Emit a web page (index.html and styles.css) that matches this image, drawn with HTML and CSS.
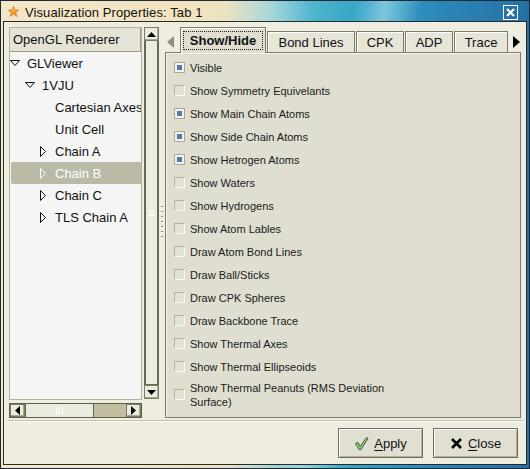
FILE: index.html
```html
<!DOCTYPE html>
<html>
<head>
<meta charset="utf-8">
<link rel="stylesheet" href="styles.css">
</head>
<body>
<div class="window">
  <div class="titlebar">
    <svg class="star" width="11" height="11" viewBox="0 0 11 11"><polygon points="5.5,0.3 7,4 10.8,4.1 7.8,6.5 8.9,10.5 5.5,8.2 2.1,10.5 3.2,6.5 0.2,4.1 4,4" fill="#f29a2e" stroke="#c8741a" stroke-width="0.6"/><polygon points="5.5,2 6.3,4.6 4.7,4.6" fill="#ffd27a"/></svg>
    <span class="title">Visualization Properties: Tab 1</span>
    <span class="closebox"><svg width="13" height="13" viewBox="0 0 13 13"><path d="M3 3 L10 10 M10 3 L3 10" stroke="#fff" stroke-width="2.2"/></svg></span>
  </div>
  <div class="content">
    <div class="main">
      <div class="leftpane">
        <div class="tree">
          <div class="tree-header">OpenGL Renderer</div>
          <div class="tree-body">
            <div class="row l0"><svg class="exp" width="10" height="10" viewBox="0 0 10 10"><path d="M0.5 2.5 H9.5 L5 7.5 Z" fill="none" stroke="#111" stroke-width="1"/></svg>GLViewer</div>
            <div class="row l1"><svg class="exp" width="10" height="10" viewBox="0 0 10 10"><path d="M0.5 2.5 H9.5 L5 7.5 Z" fill="none" stroke="#111" stroke-width="1"/></svg>1VJU</div>
            <div class="row l2"><span class="noexp"></span>Cartesian Axes</div>
            <div class="row l2"><span class="noexp"></span>Unit Cell</div>
            <div class="row l2b"><svg class="exp" width="10" height="11" viewBox="0 0 10 11"><path d="M2.5 0.5 V10.5 L7.5 5.5 Z" fill="none" stroke="#111" stroke-width="1"/></svg>Chain A</div>
            <div class="row l2b selected"><svg class="exp" width="10" height="11" viewBox="0 0 10 11"><path d="M2.5 0.5 V10.5 L7.5 5.5 Z" fill="none" stroke="#fff" stroke-width="1"/></svg>Chain B</div>
            <div class="row l2b"><svg class="exp" width="10" height="11" viewBox="0 0 10 11"><path d="M2.5 0.5 V10.5 L7.5 5.5 Z" fill="none" stroke="#111" stroke-width="1"/></svg>Chain C</div>
            <div class="row l2b"><svg class="exp" width="10" height="11" viewBox="0 0 10 11"><path d="M2.5 0.5 V10.5 L7.5 5.5 Z" fill="none" stroke="#111" stroke-width="1"/></svg>TLS Chain A</div>
          </div>
        </div>
        <div class="vscroll">
          <div class="sbtn"><svg width="9" height="5" viewBox="0 0 9 5"><path d="M0 5 L4.5 0 L9 5 Z" fill="#000"/></svg></div>
          <div class="vthumb"><span class="vgrip"></span></div>
          <div class="sbtn"><svg width="9" height="5" viewBox="0 0 9 5"><path d="M0 0 L4.5 5 L9 0 Z" fill="#000"/></svg></div>
        </div>
        <div class="hscroll">
          <div class="sbtn"><svg width="5" height="9" viewBox="0 0 5 9"><path d="M5 0 L0 4.5 L5 9 Z" fill="#000"/></svg></div>
          <div class="hthumb"><span class="hgrip"></span></div>
          <div class="htrough"></div>
          <div class="sbtn"><svg width="5" height="9" viewBox="0 0 5 9"><path d="M0 0 L5 4.5 L0 9 Z" fill="#000"/></svg></div>
        </div>
      </div>
      <div class="splitter"><span class="sgrip"></span></div>
      <div class="notebook">
        <div class="tabbar">
          <svg class="tabarrow" width="7" height="12" viewBox="0 0 7 12"><path d="M7 0 L0 6 L7 12 Z" fill="#8e8d86"/></svg>
          <div class="tab active"><span class="focus">Show/Hide</span></div>
          <div class="tab t-bond">Bond Lines</div>
          <div class="tab t-cpk">CPK</div>
          <div class="tab t-adp">ADP</div>
          <div class="tab t-trace">Trace</div>
          <svg class="tabarrow right" width="7" height="12" viewBox="0 0 7 12"><path d="M0 0 L7 6 L0 12 Z" fill="#000"/></svg>
        </div>
        <div class="page">
          <div class="opt"><span class="cb on"></span><span class="lbl">Visible</span></div>
          <div class="opt"><span class="cb"></span><span class="lbl">Show Symmetry Equivelants</span></div>
          <div class="opt"><span class="cb on"></span><span class="lbl">Show Main Chain Atoms</span></div>
          <div class="opt"><span class="cb on"></span><span class="lbl">Show Side Chain Atoms</span></div>
          <div class="opt"><span class="cb on"></span><span class="lbl">Show Hetrogen Atoms</span></div>
          <div class="opt"><span class="cb"></span><span class="lbl">Show Waters</span></div>
          <div class="opt"><span class="cb"></span><span class="lbl">Show Hydrogens</span></div>
          <div class="opt"><span class="cb"></span><span class="lbl">Show Atom Lables</span></div>
          <div class="opt"><span class="cb"></span><span class="lbl">Draw Atom Bond Lines</span></div>
          <div class="opt"><span class="cb"></span><span class="lbl">Draw Ball/Sticks</span></div>
          <div class="opt"><span class="cb"></span><span class="lbl">Draw CPK Spheres</span></div>
          <div class="opt"><span class="cb"></span><span class="lbl">Draw Backbone Trace</span></div>
          <div class="opt"><span class="cb"></span><span class="lbl">Show Thermal Axes</span></div>
          <div class="opt"><span class="cb"></span><span class="lbl">Show Thermal Ellipseoids</span></div>
          <div class="opt multi"><span class="cb"></span><span class="lbl">Show Thermal Peanuts (RMS Deviation Surface)</span></div>
        </div>
      </div>
    </div>
    <div class="sep"></div>
    <div class="buttons">
      <div class="btn"><svg width="15" height="15" viewBox="0 0 15 15"><path d="M1.5 7.5 L4 6.5 L6.2 10.5 L12.5 1.5 L14 2.5 L6.5 14 L5.5 14 Z" fill="#9fd08a" stroke="#2f5a2a" stroke-width="1" stroke-linejoin="round"/></svg><span><u>A</u>pply</span></div>
      <div class="btn"><svg width="13" height="13" viewBox="0 0 13 13"><path d="M2 2 L11 11 M11 2 L2 11" stroke="#000" stroke-width="2.6"/></svg><span><u>C</u>lose</span></div>
    </div>
  </div>
</div>
</body>
</html>
```

FILE: styles.css
```css
* { box-sizing: border-box; }
html, body { margin: 0; padding: 0; }
body {
  width: 530px;
  height: 469px;
  overflow: hidden;
  font-family: "Liberation Sans", Arial, sans-serif;
  color: #111;
}
.window {
  width: 530px;
  height: 469px;
  border: 1px solid #1e2b36;
  background:
    linear-gradient(100deg, rgba(255,255,255,0) 0%, rgba(255,255,255,0) 58%, rgba(190,235,245,0.55) 63%, rgba(255,255,255,0) 69%, rgba(255,255,255,0) 100%),
    linear-gradient(to right, #f3e7c9 0%, #f1e3be 38%, #e9e1c4 43%, #a9d8da 51%, #4eb6cf 59%, #2f9fc6 70%, #2a86b8 84%, #2470a6 100%);
  display: flex;
  flex-direction: column;
}
.titlebar {
  height: 20px;
  display: flex;
  align-items: center;
  padding-left: 7px;
  flex: none;
}
.star { margin-right: 6px; margin-top: 1px; }
.title {
  font-size: 13px;
  letter-spacing: 0.1px;
  color: #111;
  flex: 1;
  padding-top: 2px;
}
.closebox {
  width: 15px;
  height: 15px;
  border: 1px solid #fff;
  background: #2a6ea6;
  margin-right: 11px;
  margin-top: 3px;
  display: flex;
  align-items: center;
  justify-content: center;
}
.content {
  margin: 0 2px;
  height: 444px;
  border: 1px solid #2a2a26;
  background: #eeeddf;
  padding: 5px 0 6px 5px;
  display: flex;
  flex-direction: column;
}
.main {
  display: flex;
  height: 391px;
}
.leftpane {
  display: grid;
  grid-template-columns: 133px 15px;
  grid-template-rows: 373px 15px;
  column-gap: 2px;
  row-gap: 3px;
}
.tree {
  grid-row: 1;
  grid-column: 1;
  border: 1px solid #b3b19c;
  background: #f5f5f5;
  overflow: hidden;
}
.tree-header {
  height: 24px;
  background: #e4e3d5;
  border-bottom: 1px solid #9c9a87;
  border-right: 1px solid #9c9a87;
  font-size: 13px;
  line-height: 23px;
  padding-left: 3px;
  white-space: nowrap;
}
.row {
  height: 22px;
  display: flex;
  align-items: center;
  font-size: 13px;
  white-space: nowrap;
}
.row .exp { flex: none; margin-right: 7px; }
.row .noexp { display: inline-block; width: 0; }
.l0 { padding-left: 0px; }
.l1 { padding-left: 15px; }
.l2 { padding-left: 45px; }
.l2b { padding-left: 28px; }
.row.selected {
  background: #bbbaa6;
  color: #fff;
  margin-left: 1px;
  padding-left: 27px;
  border-radius: 2px 0 0 2px;
}
.vscroll {
  grid-row: 1;
  grid-column: 2;
  height: 372px;
  display: flex;
  flex-direction: column;
}
.sbtn {
  width: 15px;
  height: 15px;
  flex: none;
  background: #ecebdf;
  border: 1px solid #5e5d4b;
  border-top-color: #fff;
  border-left-color: #fff;
  box-shadow: inset -1px -1px 0 #a8a690;
  display: flex;
  align-items: center;
  justify-content: center;
  outline: 1px solid #7d7c66;
  outline-offset: -1px;
}
.vscroll .sbtn { height: 14px; }
.vthumb {
  flex: 1;
  background: #ecebdf;
  border-left: 2px solid #68674f;
  border-right: 2px solid #68674f;
  border-bottom: 1px solid #68674f;
  display: flex;
  align-items: center;
  justify-content: center;
}
.vgrip {
  width: 7px;
  height: 6px;
  border-top: 1px solid #fff;
  border-bottom: 1px solid #fff;
  position: relative;
}
.vgrip::after {
  content: "";
  position: absolute;
  left: 0; right: 0; top: 2px;
  border-top: 1px solid #fff;
}
.hscroll {
  grid-row: 2;
  grid-column: 1;
  display: flex;
  height: 15px;
  border: 1px solid #5e5d4b;
}
.hscroll .sbtn { width: 15px; height: 13px; }
.hthumb {
  width: 69px;
  background: #ecebdf;
  border-left: 1px solid #68674f;
  border-right: 1px solid #68674f;
  display: flex;
  align-items: center;
  justify-content: center;
}
.hgrip {
  width: 7px;
  height: 7px;
  border-left: 1px solid #fff;
  border-right: 1px solid #fff;
  position: relative;
}
.hgrip::after {
  content: "";
  position: absolute;
  top: 0; bottom: 0; left: 2px;
  border-left: 1px solid #fff;
}
.htrough {
  flex: 1;
  background: #c0be9e;
}
.splitter {
  width: 6px;
  display: flex;
  align-items: center;
  justify-content: center;
}
.sgrip {
  width: 2px;
  height: 34px;
  background: repeating-linear-gradient(to bottom, #85836e 0 1px, #ffffff 1px 2px, transparent 2px 5px);
}
.notebook {
  width: 356px;
  display: flex;
  flex-direction: column;
}
.tabbar {
  height: 25px;
  display: flex;
  align-items: flex-end;
  position: relative;
  z-index: 1;
}
.tabarrow { align-self: center; margin: 4px 6px 0 2px; flex: none; }
.tabarrow.right { margin: 4px 0 0 4px; }
.tab {
  height: 21px;
  background: #e6e5d8;
  border: 1px solid #7c7a68;
  border-bottom: none;
  font-size: 13px;
  display: flex;
  align-items: center;
  justify-content: center;
  box-shadow: inset 1px 1px 0 #fff;
  margin-right: 1px;
  padding-top: 1px;
}
.tab.active {
  height: 26px;
  margin-bottom: -1px;
  background: #dfded0;
  width: 86px;
  font-weight: bold;
  padding: 3px 2px 3px 2px;
  align-items: stretch;
}
.focus {
  flex: 1;
  border: 1px dotted #222;
  display: flex;
  align-items: center;
  justify-content: center;
}
.t-bond { width: 88px; }
.t-cpk { width: 48px; }
.t-adp { width: 48px; }
.t-trace { width: 54px; }
.page {
  flex: 1;
  background: #dfded0;
  border: 1px solid #7c7a68;
  box-shadow: inset 1px 1px 0 #f7f7f0;
  padding: 3px 0 0 8px;
}
.opt {
  height: 23px;
  display: flex;
  align-items: center;
  font-size: 11px;
  color: #1a1a1a;
}
.opt.multi {
  height: 31px;
  margin-top: 1px;
}
.cb {
  width: 11px;
  height: 11px;
  flex: none;
  border: 1px solid #b4b2a0;
  border-right-color: #fafaf5;
  border-bottom-color: #fafaf5;
  background: #e2e1d4;
  margin-right: 5px;
  display: flex;
  align-items: center;
  justify-content: center;
}
.cb.on {
  background: #f4f4ee;
  border: 1px solid #a9a795;
}
.cb.on::after {
  content: "";
  width: 5px;
  height: 5px;
  background: #5b76aa;
}
.lbl { max-width: 205px; line-height: 14px; }
.sep {
  margin-top: 2px;
  margin-right: 2px;
  margin-left: -2px;
  border-top: 1px solid #c2c0a6;
  border-bottom: 1px solid #fbfbf5;
}
.buttons {
  display: flex;
  justify-content: flex-end;
  gap: 10px;
  padding-right: 8px;
  margin-top: 6px;
}
.btn {
  width: 85px;
  height: 30px;
  background: #e0dfd1;
  border: 1px solid #6f6d5c;
  box-shadow: inset 1px 1px 0 #fff, inset -1px -1px 0 #b3b19d;
  display: flex;
  align-items: center;
  justify-content: center;
  gap: 5px;
  font-size: 13px;
}
.btn u { text-decoration: underline; text-underline-offset: 2px; }
```
